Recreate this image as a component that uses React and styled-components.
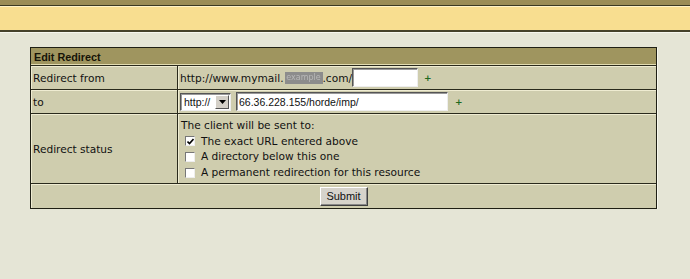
import React from "react";
import styled, { createGlobalStyle } from "styled-components";

const GlobalStyle = createGlobalStyle`
  html, body {
    margin: 0;
    padding: 0;
    background: #e5e5d6;
  }
  body {
    font-family: "DejaVu Sans", Verdana, sans-serif;
    font-size: 10.6px;
    color: #111;
  }
`;

const StTopBar = styled.div`
  height: 5px;
  background: #9b8d57;
  border-bottom: 1px solid #3c3a22;
`;

const StBanner = styled.div`
  height: 23px;
  background: #f8de90;
  border-top: 1px solid #fff3c8;
  border-bottom: 2px solid #45412a;
  box-shadow: 0 1px 0 #f6f6ee;
`;

const StContent = styled.div`
  padding: 15px 33px 0 30px;
`;

const StTable = styled.table`
  width: 627px;
  border-collapse: separate;
  border-spacing: 0;
  border: 1px solid #1f1f14;
  box-shadow: 1px 1px 0 #f8f8ee;
  background: #cfcdae;
`;

const StHeadCell = styled.th`
  height: 17px;
  padding: 0 3px;
  text-align: left;
  font-family: "Liberation Sans", Arial, sans-serif;
  font-size: 10.8px;
  font-weight: bold;
  color: #151307;
  background: #9f955f;
  box-shadow: inset 0 -1px 0 #e2dcb2;
`;

const StCell = styled.td`
  height: ${(p) => p.$h}px;
  padding: 0 2px;
  vertical-align: middle;
  border-top: 1px solid #2a2a1c;
  box-shadow: inset 1px 1px 0 #efecd2;
  text-align: ${(p) => (p.$center ? "center" : "left")};
  &:first-child {
    width: 142px;
  }
  & + & {
    border-left: 1px solid #2a2a1c;
  }
`;

const StLine = styled.div`
  display: flex;
  align-items: center;
  gap: ${(p) => p.$gap || 0}px;
`;

const StRedacted = styled.span`
  display: inline-block;
  width: 38px;
  height: 12px;
  margin-left: 1px;
  line-height: 12px;
  background: #8c8c8c;
  color: #b8b8b8;
  font-size: 8px;
  text-align: center;
  filter: blur(0.4px);
`;

const StInput = styled.input`
  box-sizing: border-box;
  width: ${(p) => p.$w}px;
  height: 19px;
  padding: 0 2px;
  font-family: "Liberation Sans", Arial, sans-serif;
  font-size: 10.5px;
  color: #111;
  background: #fff;
  border-style: solid;
  border-width: 1px;
  border-color: #555 #eee #eee #555;
  box-shadow: inset 1px 1px 0 #999;
  outline: none;
`;

const StPlus = styled.span`
  margin-left: ${(p) => p.$ml}px;
  color: #1e6a1e;
  font-weight: bold;
  font-size: 9px;
`;

const StSelect = styled.div`
  box-sizing: border-box;
  width: 51px;
  height: 18px;
  display: flex;
  align-items: center;
  justify-content: space-between;
  background: #fff;
  border-style: solid;
  border-width: 1px;
  border-color: #555 #eee #eee #555;
  box-shadow: inset 1px 1px 0 #999;
  padding: 1px 1px 1px 3px;
  font-family: "Liberation Sans", Arial, sans-serif;
  font-size: 10.5px;
`;

const StSelectBtn = styled.span`
  box-sizing: border-box;
  width: 14px;
  height: 14px;
  display: flex;
  align-items: center;
  justify-content: center;
  background: #d4d0c8;
  border-style: solid;
  border-width: 1px;
  border-color: #fff #555 #555 #fff;
`;

const StOptions = styled.div`
  padding: 4px 0 3px 1px;
  line-height: 15.6px;
`;

const StOption = styled.div`
  display: flex;
  align-items: center;
  gap: 6px;
  padding-left: 4px;
`;

const StCheck = styled.span`
  box-sizing: border-box;
  width: 10px;
  height: 10px;
  display: flex;
  align-items: center;
  justify-content: center;
  background: #fff;
  border-style: solid;
  border-width: 1px;
  border-color: #777 #eee #eee #777;
`;

const StButton = styled.button`
  width: 48px;
  height: 19px;
  padding: 0;
  font-family: "Liberation Sans", Arial, sans-serif;
  font-size: 11px;
  color: #111;
  background: #d6d3cb;
  border-style: solid;
  border-width: 1px;
  border-color: #fff #404040 #404040 #fff;
  box-shadow: inset -1px -1px 0 #888;
`;

const options = [
  { label: "The exact URL entered above", checked: true },
  { label: "A directory below this one", checked: false },
  { label: "A permanent redirection for this resource", checked: false },
];

function App() {
  return (
    <>
      <GlobalStyle />
      <StTopBar />
      <StBanner />
      <StContent>
        <StTable>
          <thead>
            <tr>
              <StHeadCell colSpan={2}>Edit Redirect</StHeadCell>
            </tr>
          </thead>
          <tbody>
            <tr>
              <StCell $h={23}>Redirect from</StCell>
              <StCell $h={23}>
                <StLine>
                  <span>http://www.mymail.</span>
                  <StRedacted>example</StRedacted>
                  <span>.com/</span>
                  <StInput $w={66} defaultValue="" />
                  <StPlus $ml={6}>+</StPlus>
                </StLine>
              </StCell>
            </tr>
            <tr>
              <StCell $h={23}>to</StCell>
              <StCell $h={23}>
                <StLine $gap={5}>
                  <StSelect>
                    <span>http://</span>
                    <StSelectBtn>
                      <svg width="7" height="4" viewBox="0 0 7 4">
                        <polygon points="0,0 7,0 3.5,4" fill="#000" />
                      </svg>
                    </StSelectBtn>
                  </StSelect>
                  <StInput $w={212} defaultValue="66.36.228.155/horde/imp/" />
                  <StPlus $ml={2}>+</StPlus>
                </StLine>
              </StCell>
            </tr>
            <tr>
              <StCell $h={68}>Redirect status</StCell>
              <StCell $h={68}>
                <StOptions>
                  <div>The client will be sent to:</div>
                  {options.map((o) => (
                    <StOption key={o.label}>
                      <StCheck>
                        {o.checked && (
                          <svg width="7" height="7" viewBox="0 0 7 7">
                            <polyline
                              points="0.5,3.5 2.5,5.5 6.5,1"
                              fill="none"
                              stroke="#000"
                              strokeWidth="1.6"
                            />
                          </svg>
                        )}
                      </StCheck>
                      <span>{o.label}</span>
                    </StOption>
                  ))}
                </StOptions>
              </StCell>
            </tr>
            <tr>
              <StCell $h={24} $center colSpan={2}>
                <StButton>Submit</StButton>
              </StCell>
            </tr>
          </tbody>
        </StTable>
      </StContent>
    </>
  );
}

export default App;
